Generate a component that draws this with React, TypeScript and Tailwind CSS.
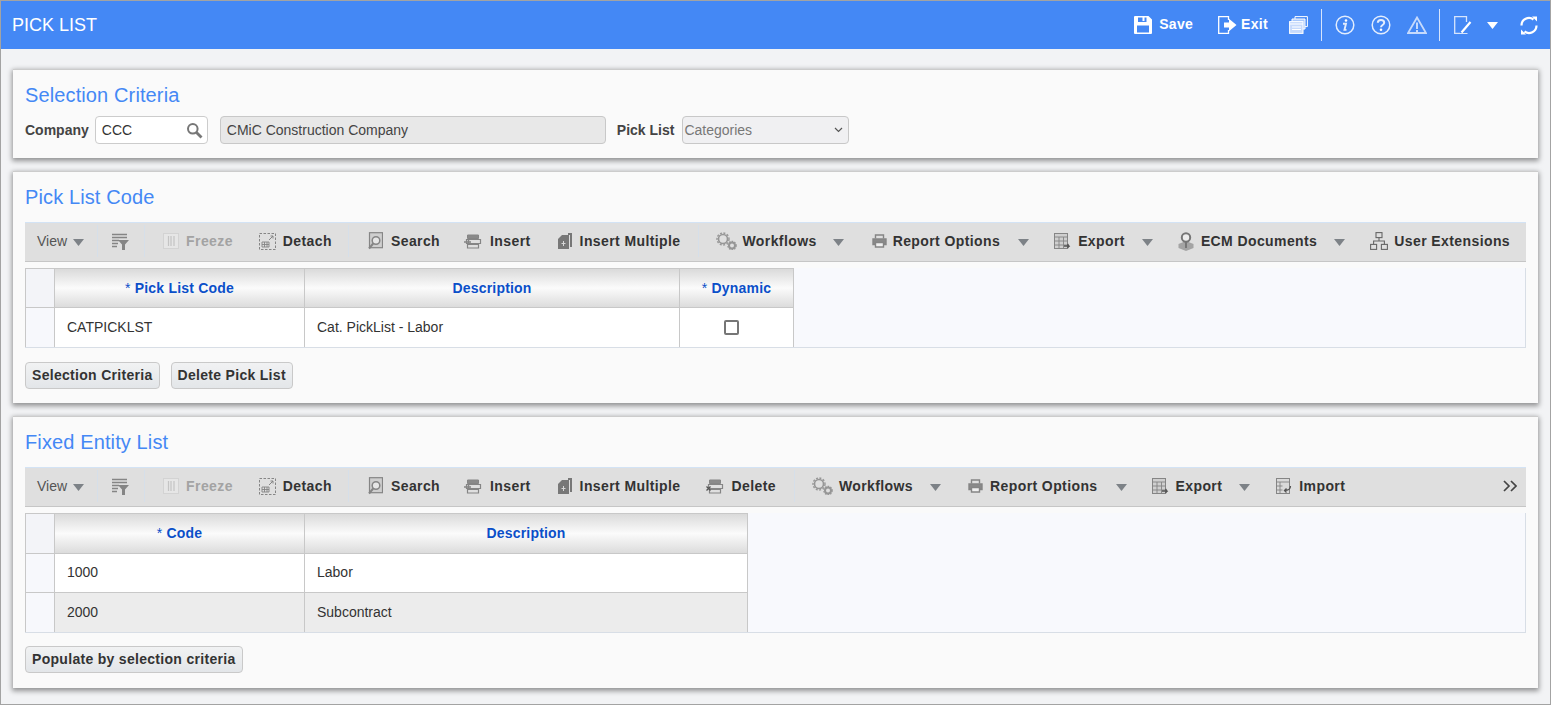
import React from 'react';

const Arrow = ({ className = '' }: { className?: string }) => (
  <svg width="11" height="7" viewBox="0 0 11 7" className={className}>
    <path d="M0 0h11L5.5 7z" fill="#7d8287" />
  </svg>
);

const Sep = ({ ml }: { ml: string }) => <div className={`h-[32px] w-px bg-[#d6dfe9] ${ml}`} />;

// Toolbar icons
const gray = '#858585';

const FilterIcon = () => (
  <svg width="19" height="17" viewBox="0 0 19 17" fill="none" stroke={gray} strokeWidth="1.4">
    <path d="M1 1.500h15M1 4.500h15M1 7.500h7M1 10.500h6M1 13.500h5" />
    <path d="M7 7h11l-4 4.500V17h-3v-5.500z" fill={gray} stroke="none" />
  </svg>
);
const FreezeIcon = () => (
  <svg width="16" height="16" viewBox="0 0 16 16" fill="none" stroke="#d3d3d3">
    <rect x="0.500" y="0.500" width="15" height="15" fill="#e6e6e6" />
    <path d="M5.500 3v10M8 3v10M11 3v10" stroke="#c4c4c4" strokeWidth="1.200" />
  </svg>
);
const DetachIcon = () => (
  <svg width="17" height="17" viewBox="0 0 17 17" fill="none" stroke={gray}>
    <rect x="0.500" y="0.500" width="16" height="16" strokeDasharray="2.500 1.500" />
    <path d="M3 9h7v5H3zM3 11.500h7M5.500 9v5M8 9v5" strokeWidth="0.900" />
    <path d="M10 7l4-4M11.500 3H14v2.500" strokeWidth="1" />
  </svg>
);
const SearchIcon = () => (
  <svg width="15" height="18" viewBox="0 0 15 18" fill="none" stroke={gray}>
    <rect x="1.500" y="0.700" width="13" height="15" fill="#cfcfcf" strokeWidth="1.200" />
    <circle cx="8" cy="8.500" r="3.800" fill="#e6e6e6" strokeWidth="1.500" />
    <path d="M5.200 11.500L1 16.500" strokeWidth="2" />
  </svg>
);
const InsertIcon = () => (
  <svg width="18" height="15" viewBox="0 0 18 15" fill="none" stroke={gray}>
    <path d="M3.500 1h11v3.500h-11z" fill="#8a8a8a" />
    <path d="M2.500 5.500h14v4h-14zM3.500 10.500h11v3.500h-11z" strokeWidth="1.200" />
    <path d="M0 8h7M4.500 5.800V10.200" strokeWidth="1.500" />
  </svg>
);
const MultiIcon = () => (
  <svg width="14" height="16" viewBox="0 0 14 16">
    <path d="M10 0h4v14h-2V2h-2z" fill="#777777" />
    <path d="M4 2h7v14H0V6z" fill="#787878" />
    <path d="M5.500 8v5M3.500 10.500h4" stroke="#d8d8d8" />
  </svg>
);
const DeleteIcon = () => (
  <svg width="18" height="15" viewBox="0 0 18 15" fill="none" stroke={gray}>
    <path d="M3.500 1h11v3.500h-11z" fill="#8a8a8a" />
    <path d="M2.500 5.500h14v4h-14zM3.500 10.500h11v3.500h-11z" strokeWidth="1.200" />
    <path d="M0.500 7.500l4 4M4.500 7.500l-4 4" stroke="#555" strokeWidth="1.300" />
  </svg>
);
const GearsIcon = () => (
  <svg width="21" height="18" viewBox="0 0 21 18" fill="none" stroke="#969696">
    <circle cx="7" cy="7" r="4.500" strokeWidth="1.600" />
    <circle cx="7" cy="7" r="6" strokeWidth="1.400" strokeDasharray="2 1.500" />
    <circle cx="16" cy="13.500" r="3" strokeWidth="2" />
    <circle cx="16" cy="13.500" r="4.200" strokeWidth="1.200" strokeDasharray="1.500 1.200" />
  </svg>
);
const PrintIcon = () => (
  <svg width="15" height="14" viewBox="0 0 15 14" fill="none" stroke={gray} strokeWidth="1.400">
    <path d="M3.500 4.500V1h8v3.500" />
    <path d="M3 10.500H1V5h13v5.500h-2" fill="#8a8a8a" />
    <path d="M3.500 8.500h8V13h-8z" fill="#f0f0f0" />
  </svg>
);
const ExportIcon = () => (
  <svg width="17" height="16" viewBox="0 0 17 16" fill="none" stroke={gray}>
    <rect x="0.500" y="0.500" width="13" height="15" fill="#cfcfcf" />
    <path d="M0.500 4h13M0.500 8h13M0.500 12h13M5 4v11.500M9.500 4v11.500" strokeWidth="0.900" />
    <path d="M10 13h5l-1.500-2M15 13l-1.500 2" stroke="#555" strokeWidth="1.300" />
  </svg>
);
const ImportIcon = () => (
  <svg width="16" height="16" viewBox="0 0 16 16" fill="none" stroke={gray}>
    <rect x="0.500" y="0.500" width="13" height="15" fill="#dadada" />
    <path d="M0.500 4h13M0.500 8h6M0.500 12h6M4 4v11.500" strokeWidth="0.900" />
    <path d="M14.500 8c0 3-2 4.500-6 4.500M10.500 10.500l-2 2 2 2" stroke="#555" strokeWidth="1.300" />
  </svg>
);
const EcmIcon = () => (
  <svg width="16" height="19" viewBox="0 0 16 19" fill="none">
    <path d="M0.500 12L8 9l7.500 3v4L8 19l-7.500-3z" fill="#a4a4a4" />
    <circle cx="8" cy="5.500" r="4.200" fill="#ededed" stroke="#767676" strokeWidth="2" />
    <path d="M8 10v6" stroke="#767676" strokeWidth="2" />
  </svg>
);
const TreeIcon = () => (
  <svg width="18" height="18" viewBox="0 0 18 18" fill="none" stroke="#666" strokeWidth="1.100">
    <rect x="6" y="0.600" width="6" height="5" />
    <rect x="0.600" y="12.400" width="6" height="5" />
    <rect x="11.400" y="12.400" width="6" height="5" />
    <path d="M9 5.600v3.400M3.600 12.400V9h10.800v3.400" />
  </svg>
);

interface ToolProps {
  icon: React.ReactNode;
  label: string;
  ml: string;
  gap: string;
  disabled?: boolean;
}

const Tool = ({ icon, label, ml, gap, disabled }: ToolProps) => (
  <div className={`flex items-center ${ml} ${gap}`}>
    {icon}
    <span className={`text-[14px] font-bold tracking-[0.4px] whitespace-nowrap ${disabled ? 'text-[#a3a3a3]' : 'text-[#333333]'}`}>
      {label}
    </span>
  </div>
);

// Left part shared by both grid toolbars
const ToolbarStart = () => (
  <>
    <span className="ml-[12px] text-[14px] text-[#555555]">View</span>
    <Arrow className="ml-[6px] mt-[3px]" />
    <Sep ml="ml-[13px]" />
    <div className="ml-[13px]"><FilterIcon /></div>
    <Sep ml="ml-[14px]" />
    <Tool icon={<FreezeIcon />} label="Freeze" ml="ml-[18px]" gap="gap-[7px]" disabled />
    <Tool icon={<DetachIcon />} label="Detach" ml="ml-[26px]" gap="gap-[7px]" />
    <Sep ml="ml-[16px]" />
    <Tool icon={<SearchIcon />} label="Search" ml="ml-[19px]" gap="gap-[8px]" />
    <Tool icon={<InsertIcon />} label="Insert" ml="ml-[24px]" gap="gap-[8px]" />
    <Tool icon={<MultiIcon />} label="Insert Multiple" ml="ml-[27px]" gap="gap-[8px]" />
  </>
);

const Toolbar = ({ children }: { children: React.ReactNode }) => (
  <div className="mt-[13px] flex h-[40px] items-center border-t border-b border-t-[#d3e3f5] border-b-[#c6c6c6] bg-[#dfdfdf] pb-[2px]">
    {children}
  </div>
);

const HeadCell = ({ width, children }: { width: string; children: React.ReactNode }) => (
  <div className={`flex items-center justify-center border-r border-[#c8c8c8] bg-linear-to-b from-[#dadada] via-[#fbfbfb] to-[#dcdcdc] text-[14px] font-bold tracking-[0.2px] text-[#0b4fc9] ${width}`}>
    {children}
  </div>
);

const Cell = ({ width, children }: { width: string; children?: React.ReactNode }) => (
  <div className={`flex items-center border-r border-[#c8c8c8] px-[12px] text-[14px] text-[#333333] ${width}`}>
    {children}
  </div>
);

const RowHead = ({ head }: { head?: boolean }) => (
  <div className={`w-[29px] shrink-0 border-r border-[#c8c8c8] ${head ? 'bg-[#f3f4f8]' : 'bg-[#f7f8fc]'}`} />
);

const Btn = ({ children }: { children: React.ReactNode }) => (
  <button className="flex h-[27px] items-center rounded-[4px] border border-[#c9c9c9] bg-linear-to-b from-[#f1f2f3] to-[#e3e6e9] px-[6px] text-[14px] font-bold tracking-[0.3px] text-[#333333]">
    {children}
  </button>
);

const Panel = ({ title, children, pb }: { title: string; children: React.ReactNode; pb: string }) => (
  <section className={`border-t border-[#cccccc] bg-[#fafafa] px-[12px] pt-[13px] shadow-[0_2px_5px_1px_rgba(0,0,0,0.4)] ${pb}`}>
    <h2 className="h-[24px] text-[20px] leading-[24px] tracking-[0.12px] text-[#4488f5]">{title}</h2>
    {children}
  </section>
);

// Header icons
const SaveIcon = () => (
  <svg width="18" height="18" viewBox="0 0 18 18">
    <path fillRule="evenodd" fill="#fff" d="M1 0h13.500L18 3.500V17a1 1 0 0 1-1 1H1a1 1 0 0 1-1-1V1a1 1 0 0 1 1-1zM4 1.500V6h8.500V1.500h-2V5h-2V1.500zM3 9.500V16.500h12V9.500z" />
  </svg>
);
const ExitIcon = () => (
  <svg width="19" height="18" viewBox="0 0 19 18" fill="none">
    <path d="M10.500 4V.7H.7v16.600h9.800V14" stroke="#fff" strokeWidth="1.300" />
    <path d="M6 6.500h5V2.800L18.500 9 11 15.200v-3.700H6z" fill="#fff" />
  </svg>
);
const CopiesIcon = () => (
  <svg width="19" height="18" viewBox="0 0 19 18" fill="none" stroke="#fff">
    <path d="M6 3V.6h12.400v10H16" />
    <path d="M3 5.500V3h13v10h-2" fill="#a9c8fa" />
    <rect x="0.600" y="5.600" width="13.400" height="11.800" fill="#c6dafc" />
    <path d="M0.600 8h13.400M3 11h9M3 13.500h9" strokeWidth="1.200" />
  </svg>
);
const InfoIcon = () => (
  <svg width="20" height="20" viewBox="0 0 20 20" fill="none" stroke="#e3edfd">
    <circle cx="10" cy="10" r="8.800" strokeWidth="1.500" />
    <path d="M8 8.700h3l-1.500 6.200h2" strokeWidth="1.900" />
    <circle cx="11" cy="5.500" r="1.300" fill="#fff" stroke="none" />
  </svg>
);
const HelpIcon = () => (
  <svg width="20" height="20" viewBox="0 0 20 20" fill="none" stroke="#e3edfd">
    <circle cx="10" cy="10" r="8.800" strokeWidth="1.500" />
    <path d="M6.800 7.800C6.800 5.800 8.300 5 10 5s3.200 1 3.200 2.700c0 2.300-3.200 2.300-3.200 4.500" strokeWidth="2" />
    <circle cx="10" cy="14.800" r="1.300" fill="#fff" stroke="none" />
  </svg>
);
const WarnIcon = () => (
  <svg width="20" height="18" viewBox="0 0 20 18" fill="none" stroke="#c6dafc">
    <path d="M10 1.500L19 17H1z" strokeWidth="1.800" />
    <path d="M10 6.500V13M10 14V16" strokeWidth="2" />
  </svg>
);
const EditIcon = () => (
  <svg width="19" height="18" viewBox="0 0 19 18" fill="none" stroke="#d6e4fc">
    <path d="M12.500 6V.7H.7v16.600H6" strokeWidth="1.300" />
    <path d="M7.500 16.500L16.500 6" stroke="#fff" strokeWidth="2.200" />
    <path d="M5.500 17.500h8" strokeWidth="1" />
  </svg>
);
const RefreshIcon = () => (
  <svg width="18" height="19" viewBox="0 0 18 19" fill="none" stroke="#fff" strokeWidth="2.200">
    <path d="M1.500 9.500A7.500 7.500 0 0 1 13.500 3.500" />
    <path d="M16.500 9.500A7.500 7.500 0 0 1 4.500 15.500" />
    <path d="M12 0.500h5v5z" fill="#fff" stroke="none" />
    <path d="M6 18.500H1v-5z" fill="#fff" stroke="none" />
  </svg>
);

const Header = () => (
  <header className="flex h-[48px] shrink-0 items-center bg-[#4488f5] text-white">
    <h1 className="ml-[11px] text-[18px]">PICK LIST</h1>
    <div className="ml-auto flex items-center">
      <SaveIcon />
      <span className="mb-[2px] ml-[7px] text-[14px] font-bold tracking-[0.3px]">Save</span>
      <div className="ml-[25px]"><ExitIcon /></div>
      <span className="mb-[2px] ml-[4px] text-[14px] font-bold tracking-[0.3px]">Exit</span>
      <div className="ml-[21px]"><CopiesIcon /></div>
      <div className="ml-[13px] h-[32px] w-px bg-[#d6e4fc]" />
      <div className="ml-[13px]"><InfoIcon /></div>
      <div className="ml-[16px]"><HelpIcon /></div>
      <div className="ml-[16px]"><WarnIcon /></div>
      <div className="ml-[12px] h-[32px] w-px bg-[#d6e4fc]" />
      <div className="ml-[14px]"><EditIcon /></div>
      <svg width="11" height="7" viewBox="0 0 11 7" className="ml-[14px]"><path d="M0 0h11L5.500 7z" fill="#fff" /></svg>
      <div className="ml-[22px] mr-[12px]"><RefreshIcon /></div>
    </div>
  </header>
);

export default function App() {
  return (
    <div className="flex h-[705px] flex-col overflow-hidden border border-[#a3a3a3] bg-[#f2f3f5] font-['Liberation_Sans',Arial,sans-serif]">
      <Header />
      <main className="flex flex-col gap-[13px] px-[12px] pt-[20px]">
        <Panel title="Selection Criteria" pb="pb-[14px]">
          <div className="mt-[9px] flex h-[28px] items-center text-[14px]">
            <label className="font-bold text-[#444444]">Company</label>
            <div className="ml-[6px] flex h-[28px] w-[113px] items-center justify-between rounded-[4px] border border-[#cccccc] bg-white pl-[6px] pr-[4px] text-[#333333]">
              CCC
              <svg width="17" height="17" viewBox="0 0 17 17" fill="none" stroke="#777777">
                <circle cx="6.800" cy="6.800" r="4.800" strokeWidth="2" />
                <path d="M10.500 10.500L15.500 15.500" strokeWidth="2.800" />
              </svg>
            </div>
            <div className="ml-[12px] flex h-[28px] w-[386px] items-center rounded-[4px] border border-[#c8c8c8] bg-[#e8e8e8] px-[6px] text-[#444444]">
              CMiC Construction Company
            </div>
            <label className="ml-[11px] font-bold text-[#444444]">Pick List</label>
            <div className="ml-[8px] flex h-[28px] w-[167px] items-center justify-between rounded-[4px] border border-[#c8c8c8] bg-[#f0f0f2] pl-[1px] pr-[5px] text-[#777777]">
              Categories
              <svg width="9" height="6" viewBox="0 0 9 6" fill="none" stroke="#555555" strokeWidth="1.200">
                <path d="M1 1l3.500 3.500L8 1" />
              </svg>
            </div>
          </div>
        </Panel>

        <Panel title="Pick List Code" pb="pb-[14px]">
          <Toolbar>
            <ToolbarStart />
            <Sep ml="ml-[17px]" />
            <Tool icon={<GearsIcon />} label="Workflows" ml="ml-[17px]" gap="gap-[6px]" />
            <Arrow className="ml-[16px] mt-[3px]" />
            <Tool icon={<PrintIcon />} label="Report Options" ml="ml-[28px]" gap="gap-[6px]" />
            <Arrow className="ml-[18px] mt-[3px]" />
            <Tool icon={<ExportIcon />} label="Export" ml="ml-[25px]" gap="gap-[7px]" />
            <Arrow className="ml-[17px] mt-[3px]" />
            <Tool icon={<EcmIcon />} label="ECM Documents" ml="ml-[25px]" gap="gap-[7px]" />
            <Arrow className="ml-[17px] mt-[3px]" />
            <Tool icon={<TreeIcon />} label="User Extensions" ml="ml-[25px]" gap="gap-[6px]" />
          </Toolbar>
          <div className="mt-[6px] h-[80px] border-r border-b border-[#d8dee6] bg-[#f8f9fd]">
            <div className="w-[769px] border-t border-l border-[#c8c8c8]">
              <div className="flex h-[39px] border-b border-[#c8c8c8]">
                <RowHead head />
                <HeadCell width="w-[250px]"><span className="font-normal">*&nbsp;</span>Pick List Code</HeadCell>
                <HeadCell width="w-[375px]">Description</HeadCell>
                <HeadCell width="w-[114px]"><span className="font-normal">*&nbsp;</span>Dynamic</HeadCell>
              </div>
              <div className="flex h-[39px]">
                <RowHead />
                <div className="flex flex-1 bg-white">
                  <Cell width="w-[250px]">CATPICKLST</Cell>
                  <Cell width="w-[375px]">Cat. PickList - Labor</Cell>
                  <div className="flex w-[114px] items-center justify-center border-r border-[#c8c8c8] pr-[10px]">
                    <div className="h-[15px] w-[15px] rounded-[2px] border-2 border-[#767676] bg-white" />
                  </div>
                </div>
              </div>
            </div>
          </div>
          <div className="mt-[14px] flex gap-[11px]">
            <Btn>Selection Criteria</Btn>
            <Btn>Delete Pick List</Btn>
          </div>
        </Panel>

        <Panel title="Fixed Entity List" pb="pb-[15px]">
          <Toolbar>
            <ToolbarStart />
            <Tool icon={<DeleteIcon />} label="Delete" ml="ml-[25px]" gap="gap-[8px]" />
            <Sep ml="ml-[18px]" />
            <Tool icon={<GearsIcon />} label="Workflows" ml="ml-[17px]" gap="gap-[6px]" />
            <Arrow className="ml-[17px] mt-[3px]" />
            <Tool icon={<PrintIcon />} label="Report Options" ml="ml-[27px]" gap="gap-[7px]" />
            <Arrow className="ml-[18px] mt-[3px]" />
            <Tool icon={<ExportIcon />} label="Export" ml="ml-[25px]" gap="gap-[7px]" />
            <Arrow className="ml-[17px] mt-[3px]" />
            <Tool icon={<ImportIcon />} label="Import" ml="ml-[26px]" gap="gap-[7px]" />
            <svg width="14" height="12" viewBox="0 0 14 12" fill="none" stroke="#444444" strokeWidth="1.700" className="ml-auto mr-[9px]">
              <path d="M1 1l5 5-5 5M8 1l5 5-5 5" />
            </svg>
          </Toolbar>
          <div className="mt-[6px] h-[120px] border-r border-b border-[#d8dee6] bg-[#f8f9fd]">
            <div className="w-[723px] border-t border-l border-[#c8c8c8]">
              <div className="flex h-[40px] border-b border-[#c8c8c8]">
                <RowHead head />
                <HeadCell width="w-[250px]"><span className="font-normal">*&nbsp;</span>Code</HeadCell>
                <HeadCell width="w-[443px]">Description</HeadCell>
              </div>
              <div className="flex h-[39px] border-b border-[#c8c8c8]">
                <RowHead />
                <div className="flex flex-1 bg-white">
                  <Cell width="w-[250px] pb-[2px]">1000</Cell>
                  <Cell width="w-[443px] pb-[2px]">Labor</Cell>
                </div>
              </div>
              <div className="flex h-[39px]">
                <RowHead />
                <div className="flex flex-1 bg-[#ececec]">
                  <Cell width="w-[250px]">2000</Cell>
                  <Cell width="w-[443px]">Subcontract</Cell>
                </div>
              </div>
            </div>
          </div>
          <div className="mt-[13px] flex">
            <Btn>Populate by selection criteria</Btn>
          </div>
        </Panel>
      </main>
    </div>
  );
}
